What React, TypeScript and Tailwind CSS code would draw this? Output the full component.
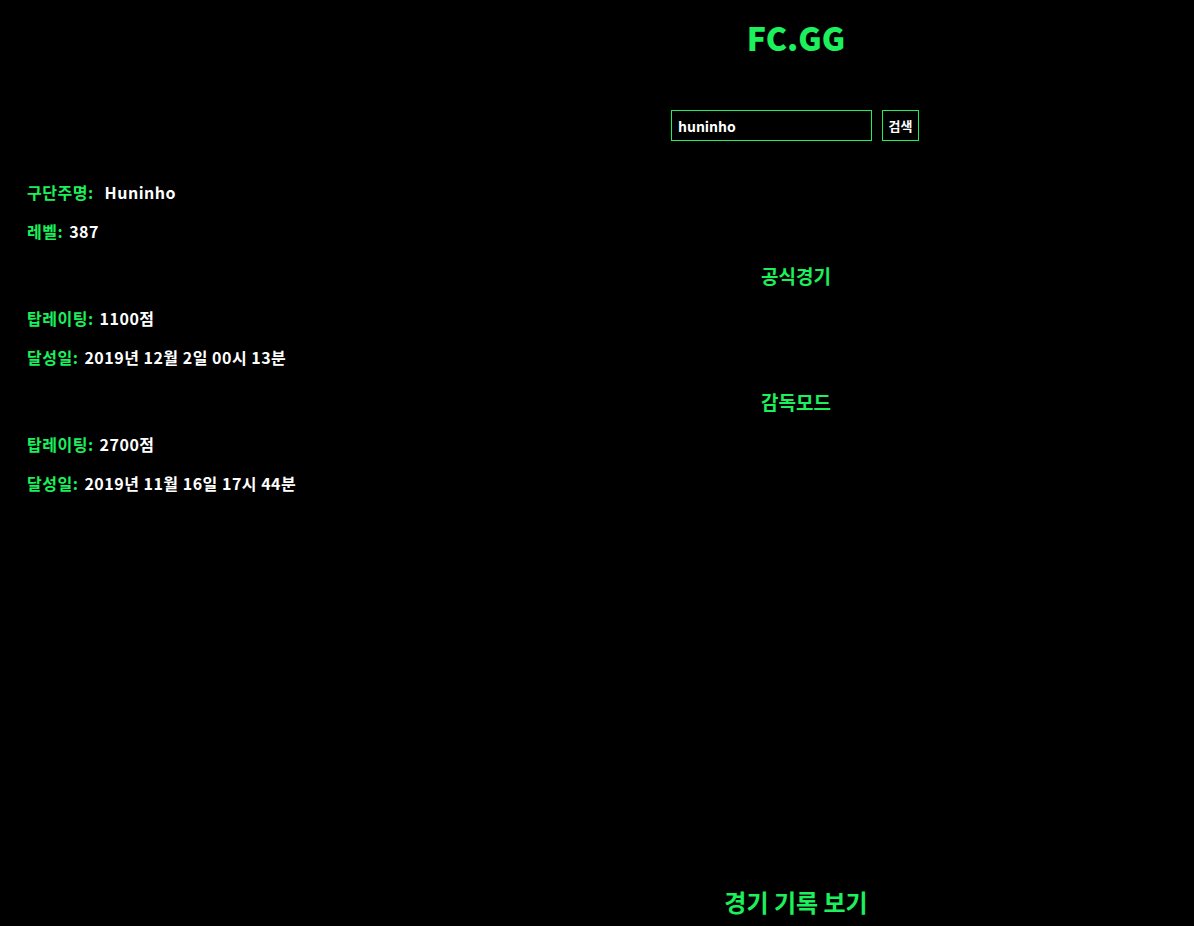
import { useState } from 'react'

const GREEN = 'text-[#1cf05c]'

function Row({ label, value, gap = false }: { label: string; value: string; gap?: boolean }) {
  return (
    <div className="h-[39px] flex items-center text-[16px] font-bold tracking-[0.5px]">
      <span className={GREEN}>{label}:</span>
      <span className={gap ? 'ml-[11px]' : 'ml-[6px]'}>{value}</span>
    </div>
  )
}

function Section({ title }: { title: string }) {
  return (
    <div className="grid grid-cols-[398px_1fr] h-[48px] pt-[4px] items-center">
      <div />
      <h2 className={`text-center text-[19px] font-bold ${GREEN}`}>{title}</h2>
    </div>
  )
}

export default function App() {
  const [nick, setNick] = useState('huninho')

  return (
    <div className="min-h-screen bg-black text-white font-['Noto_Sans_CJK_KR','Noto_Sans',sans-serif]">
      {/* 헤더 */}
      <div className="grid grid-cols-[398px_1fr]">
        <div />
        <div className="flex flex-col items-center pt-[15px]">
          <h1 className={`text-[32px] leading-[44px] font-black ${GREEN}`}>FC.GG</h1>
          <form
            className="mt-[51px] flex gap-[10px] -translate-x-px"
            onSubmit={e => e.preventDefault()}
          >
            <input
              value={nick}
              onChange={e => setNick(e.target.value)}
              className="w-[201px] h-[31px] bg-black border border-[#1cf05c] px-[6px] text-[14px] font-bold text-white outline-none"
            />
            <button className="w-[37px] h-[31px] border border-[#1cf05c] text-[13px] font-bold text-white">
              검색
            </button>
          </form>
        </div>
      </div>

      {/* 유저 정보 */}
      <div className="mt-[31px] px-[27px]">
        <Row label="구단주명" value="Huninho" gap />
        <Row label="레벨" value="387" />
      </div>

      <Section title="공식경기" />
      <div className="px-[27px]">
        <Row label="탑레이팅" value="1100점" />
        <Row label="달성일" value="2019년 12월 2일 00시 13분" />
      </div>

      <Section title="감독모드" />
      <div className="px-[27px]">
        <Row label="탑레이팅" value="2700점" />
        <Row label="달성일" value="2019년 11월 16일 17시 44분" />
      </div>

      <div className="grid grid-cols-[398px_1fr] mt-[382px]">
        <div />
        <h2 className={`text-center text-[24px] leading-[36px] font-bold ${GREEN}`}>경기 기록 보기</h2>
      </div>
    </div>
  )
}
